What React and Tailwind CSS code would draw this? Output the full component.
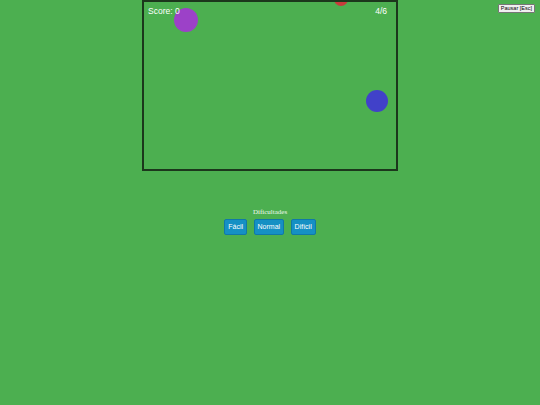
import React from "react";

const Ball = ({ x, y, r, color }) => (
  <div
    className="absolute rounded-full"
    style={{ left: x - r, top: y - r, width: r * 2, height: r * 2, background: color }}
  />
);

export default function App() {
  const levels = ["Fácil", "Normal", "Difícil"];

  return (
    <div className="relative w-[540px] h-[405px] bg-[#4caf50] overflow-hidden [font-family:'Liberation_Sans',Arial,sans-serif]">
      <button className="absolute right-[5px] top-[4px] h-[9px] px-[2px] bg-[#f0f0f0] border border-[#767676] rounded-[1px] text-[5.5px] leading-[7px] text-black [font-family:'Liberation_Sans',Arial,sans-serif]">
        Pausar [Esc]
      </button>

      <div className="flex flex-col items-center">
        <div className="relative w-[256px] h-[171px] border-2 border-[#1c371c] overflow-hidden">
          <Ball x={41.5} y={17.5} r={12} color="#9c41c8" />
          <Ball x={232.5} y={98.5} r={11} color="#4141c9" />
          <Ball x={196.5} y={-3} r={7} color="#c83b3b" />
          <div className="relative z-10 flex justify-between px-[4px] pt-[4px] text-white text-[8.5px] leading-[10px]">
            <span>Score: 0</span>
            <span className="pr-[5px]">4/6</span>
          </div>
        </div>

        <div className="mt-[37px] text-[7px] leading-[9px] text-[#eef8ee] [font-family:'Liberation_Serif','Times_New_Roman',serif]">
          Dificultades
        </div>
        <div className="mt-[2px] flex gap-[6.5px]">
          {levels.map((l) => (
            <button
              key={l}
              className="h-[16px] px-[3px] bg-[#1590c4] border border-[#1078a8] rounded-[2px] text-white text-[7px] leading-[14px] [font-family:'Liberation_Sans',Arial,sans-serif]"
            >
              {l}
            </button>
          ))}
        </div>
      </div>
    </div>
  );
}
